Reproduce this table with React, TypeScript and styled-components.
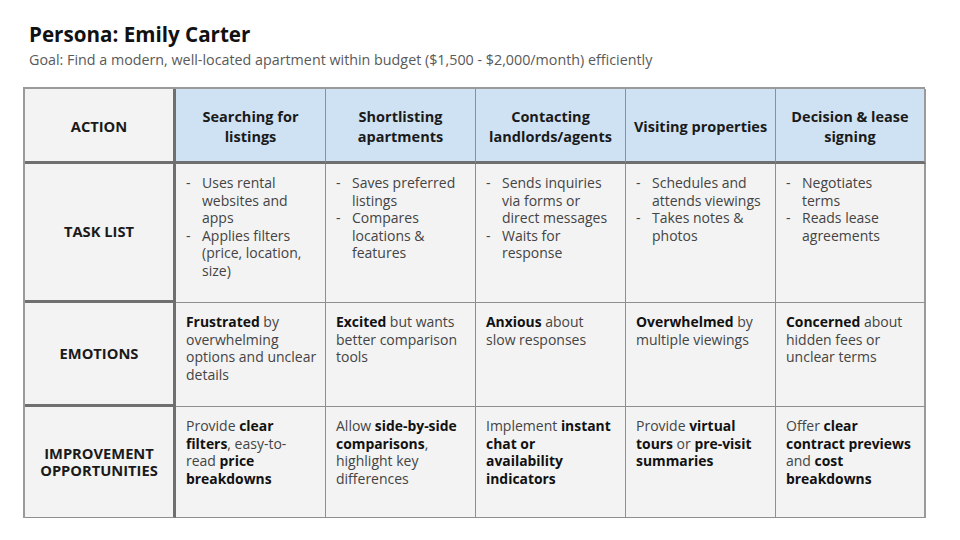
import React from "react";
import styled, { createGlobalStyle } from "styled-components";

const Global = createGlobalStyle`
  html, body { margin: 0; padding: 0; background: #ffffff; }
  body { font-family: "Open Sans", Roboto, "Liberation Sans", sans-serif; }
`;

const Page = styled.div`
  width: 960px;
  height: 540px;
  box-sizing: border-box;
  padding: 21px 0 0 23px;
  background: #fff;
`;

const Title = styled.h1`
  margin: 0 0 0 6px;
  font-size: 20.6px;
  line-height: 27px;
  font-weight: 700;
  color: #111;
`;

const Goal = styled.p`
  margin: 3px 0 0 6px;
  font-size: 14.3px;
  line-height: 18px;
  color: #595959;
`;

const Table = styled.div`
  margin-top: 18px;
  display: grid;
  grid-template-columns: 151px repeat(5, 150px);
  grid-template-rows: 75px 139px 104px 111px;
  width: 902px;
  box-sizing: border-box;
  border-top: 2px solid #9a9a9a;
  border-left: 2px solid #9a9a9a;
`;

const Cell = styled.div<{
  $head?: boolean;
  $label?: boolean;
  $thickBottom?: boolean;
  $lastCol?: boolean;
  $topRow?: boolean;
}>`
  box-sizing: border-box;
  background: ${(p) => (p.$head ? "#cfe2f3" : "#f3f3f3")};
  border-right: ${(p) => (p.$label ? "3px solid #6f6f6f" : p.$lastCol ? "2px solid #9a9a9a" : "1px solid #8f8f8f")};
  border-bottom: ${(p) => (p.$thickBottom ? "3px solid #6f6f6f" : "1px solid #8f8f8f")};
  display: flex;
  ${(p) =>
    p.$head || p.$label
      ? `align-items: center; justify-content: center; text-align: center; padding: ${p.$topRow ? "4px" : "0"} 6px 0;`
      : `align-items: flex-start; padding: 10px 6px 0 10px;`}
  font-size: ${(p) => (p.$head ? "14.5px" : p.$label ? "14.7px" : "14px")};
  line-height: ${(p) => (p.$head ? "20px" : "17.5px")};
  color: ${(p) => (p.$head || p.$label ? "#1a1a1a" : "#444")};
  font-weight: ${(p) => (p.$head || p.$label ? 700 : 400)};
  white-space: pre-line;
`;

const Dashes = styled.ul`
  list-style: none;
  margin: 0;
  padding: 0;
`;

const DashItem = styled.li`
  display: flex;
  &::before {
    content: "-";
    flex: 0 0 16px;
  }
`;

const Body = styled.div``;

const B = styled.b`
  font-weight: 700;
  font-size: 13.9px;
  color: #111;
`;

const headers = [
  "Searching for\nlistings",
  "Shortlisting\napartments",
  "Contacting\nlandlords/agents",
  "Visiting properties",
  "Decision & lease\nsigning",
];

const tasks: string[][] = [
  ["Uses rental\nwebsites and\napps", "Applies filters\n(price, location,\nsize)"],
  ["Saves preferred\nlistings", "Compares\nlocations &\nfeatures"],
  ["Sends inquiries\nvia forms or\ndirect messages", "Waits for\nresponse"],
  ["Schedules and\nattends viewings", "Takes notes &\nphotos"],
  ["Negotiates\nterms", "Reads lease\nagreements"],
];

const emotions: React.ReactNode[] = [
  <><B>Frustrated</B> by{"\n"}overwhelming{"\n"}options and unclear{"\n"}details</>,
  <><B>Excited</B> but wants{"\n"}better comparison{"\n"}tools</>,
  <><B>Anxious</B> about{"\n"}slow responses</>,
  <><B>Overwhelmed</B> by{"\n"}multiple viewings</>,
  <><B>Concerned</B> about{"\n"}hidden fees or{"\n"}unclear terms</>,
];

const improvements: React.ReactNode[] = [
  <>Provide <B>clear</B>{"\n"}<B>filters</B>, easy-to-{"\n"}read <B>price</B>{"\n"}<B>breakdowns</B></>,
  <>Allow <B>side-by-side</B>{"\n"}<B>comparisons</B>,{"\n"}highlight key{"\n"}differences</>,
  <>Implement <B>instant</B>{"\n"}<B>chat or</B>{"\n"}<B>availability</B>{"\n"}<B>indicators</B></>,
  <>Provide <B>virtual</B>{"\n"}<B>tours</B> or <B>pre-visit</B>{"\n"}<B>summaries</B></>,
  <>Offer <B>clear</B>{"\n"}<B>contract previews</B>{"\n"}and <B>cost</B>{"\n"}<B>breakdowns</B></>,
];

export default function App() {
  return (
    <Page>
      <Global />
      <Title>Persona: Emily Carter</Title>
      <Goal>Goal: Find a modern, well-located apartment within budget ($1,500 - $2,000/month) efficiently</Goal>
      <Table>
        <Cell $label $thickBottom $topRow>ACTION</Cell>
        {headers.map((h, i) => (
          <Cell key={h} $head $thickBottom $topRow $lastCol={i === 4}>{h}</Cell>
        ))}
        <Cell $label $thickBottom>TASK LIST</Cell>
        {tasks.map((t, i) => (
          <Cell key={i} $lastCol={i === 4}>
            <Dashes>
              {t.map((x) => (
                <DashItem key={x}>{x}</DashItem>
              ))}
            </Dashes>
          </Cell>
        ))}
        <Cell $label $thickBottom>EMOTIONS</Cell>
        {emotions.map((e, i) => (
          <Cell key={i} $lastCol={i === 4}><Body>{e}</Body></Cell>
        ))}
        <Cell $label>{"IMPROVEMENT\nOPPORTUNITIES"}</Cell>
        {improvements.map((e, i) => (
          <Cell key={i} $lastCol={i === 4}><Body>{e}</Body></Cell>
        ))}
      </Table>
    </Page>
  );
}
